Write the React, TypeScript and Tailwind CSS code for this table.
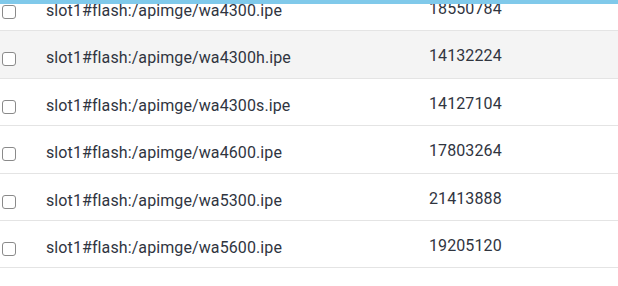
const ROWS = [
  { name: 'slot1#flash:/apimge/wa4300.ipe', size: '18550784', box: 'h-[47px] -mt-[20px]' },
  { name: 'slot1#flash:/apimge/wa4300h.ipe', size: '14132224', box: 'h-[48px] bg-[#f4f4f4]' },
  { name: 'slot1#flash:/apimge/wa4300s.ipe', size: '14127104', box: 'h-[47px]' },
  { name: 'slot1#flash:/apimge/wa4600.ipe', size: '17803264', box: 'h-[48px]' },
  { name: 'slot1#flash:/apimge/wa5300.ipe', size: '21413888', box: 'h-[47px]' },
  { name: 'slot1#flash:/apimge/wa5600.ipe', size: '19205120', box: 'h-[47px]' }
]

export default function App() {
  return (
    <div className="w-[618px] h-[286px] bg-white overflow-hidden font-['Roboto','Noto_Sans',sans-serif] text-[16px] leading-[24px] text-[#30353f]">
      {/* header edge */}
      <div className="h-[4px] bg-[#80c9ea]" />

      <div className="overflow-hidden">
        {ROWS.map(r => (
          <div
            key={r.name}
            className={`grid grid-cols-[46px_382px_1fr] items-start pt-[15px] border-b border-[#e4e4e4] ${r.box}`}
          >
            <div className="pl-[2px] mt-[6px]">
              <span className="block w-[14px] h-[14px] rounded-[3px] border border-[#8a8a8a] bg-white" />
            </div>
            <span className="whitespace-nowrap tracking-[0.1px]">{r.name}</span>
            <span className="-mt-[2px] pl-[1px] tracking-[0.1px]">{r.size}</span>
          </div>
        ))}
      </div>
    </div>
  )
}
